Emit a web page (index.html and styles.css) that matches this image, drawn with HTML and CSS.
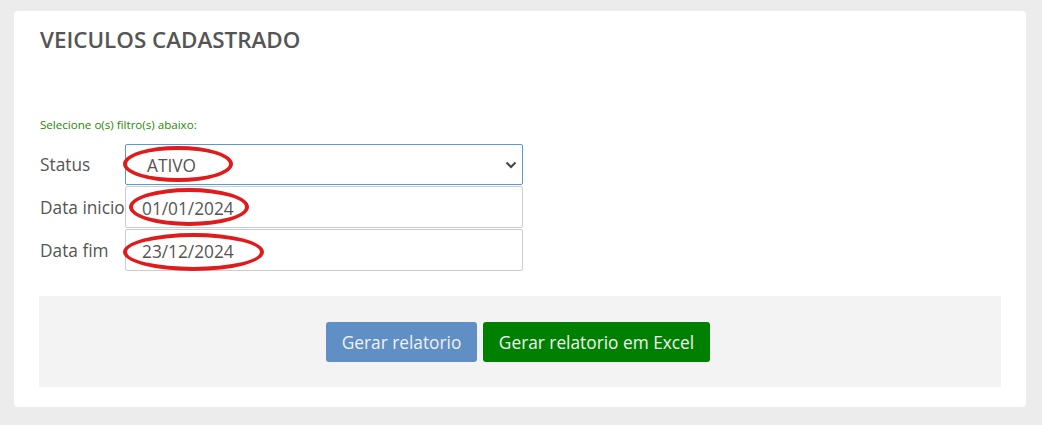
FILE: index.html
```html
<!DOCTYPE html>
<html lang="pt">
<head>
<meta charset="utf-8">
<title>Veiculos cadastrado</title>
<link rel="stylesheet" href="styles.css">
</head>
<body>
<div class="card">
  <h2 class="title">VEICULOS CADASTRADO</h2>
  <p class="hint">Selecione o(s) filtro(s) abaixo:</p>
  <div class="form">
    <div class="row">
      <label class="label">Status</label>
      <div class="field field-select">
        <span class="value value-select">ATIVO</span>
        <svg class="chevron" width="12" height="8" viewBox="0 0 12 8"><path d="M1.5 1.5 L6 6 L10.5 1.5" fill="none" stroke="#444" stroke-width="2"/></svg>
        <span class="mark mark-1"></span>
      </div>
    </div>
    <div class="row">
      <label class="label">Data inicio</label>
      <div class="field field-input">
        <span class="value">01/01/2024</span>
        <span class="mark mark-2"></span>
      </div>
    </div>
    <div class="row">
      <label class="label">Data fim</label>
      <div class="field field-input">
        <span class="value">23/12/2024</span>
        <span class="mark mark-3"></span>
      </div>
    </div>
  </div>
  <div class="actions">
    <button class="btn btn-blue">Gerar relatorio</button>
    <button class="btn btn-green">Gerar relatorio em Excel</button>
  </div>
</div>
</body>
</html>
```
FILE: styles.css
```css
html, body {
  margin: 0;
  padding: 0;
  background: #ececec;
}
body {
  padding: 11px 16px 0 14px;
  font-family: "Open Sans", "Liberation Sans", sans-serif;
  color: #555;
}
.card {
  width: 1012px;
  height: 396px;
  box-sizing: border-box;
  background: #fff;
  border-radius: 4px;
  padding: 14px 25px 20px 25px;
}
.title {
  margin: 0 0 0 1px;
  font-size: 22.4px;
  line-height: 30px;
  font-weight: 600;
  color: #555;
}
.hint {
  margin: 62px 0 0 1px;
  font-size: 11.6px;
  line-height: 15px;
  color: #1e8a00;
  font-weight: 400;
}
.form {
  margin-top: 12px;
  display: flex;
  flex-direction: column;
  gap: 1px;
}
.row {
  display: flex;
  align-items: center;
}
.label {
  width: 86px;
  padding-left: 1px;
  box-sizing: border-box;
  font-size: 17.3px;
  color: #555;
  white-space: nowrap;
}
.field {
  position: relative;
  width: 398px;
  height: 42px;
  box-sizing: border-box;
  border: 1px solid #ccc;
  border-radius: 2px;
  display: flex;
  align-items: center;
  padding-left: 16px;
  padding-top: 2px;
  font-size: 17.3px;
  color: #555;
}
.field-select {
  height: 41px;
  border-color: #5b97e0;
  padding-left: 21px;
}
.chevron {
  position: absolute;
  right: 5px;
  top: 16px;
}
.mark {
  position: absolute;
  border: 4px solid #e01b1b;
  border-radius: 50%;
  box-sizing: border-box;
  pointer-events: none;
}
.mark-1 {
  left: -3px;
  top: 1px;
  width: 110px;
  height: 36px;
}
.mark-2 {
  left: 3px;
  top: 1px;
  width: 120px;
  height: 38px;
}
.mark-3 {
  left: -3px;
  top: 3px;
  width: 141px;
  height: 38px;
}
.actions {
  margin-top: 25px;
  height: 91px;
  background: #f3f3f3;
  display: flex;
  justify-content: center;
  align-items: flex-start;
  padding-top: 26px;
  padding-right: 4px;
  box-sizing: border-box;
  gap: 6px;
}
.btn {
  height: 40px;
  border: none;
  border-radius: 3px;
  font-family: "Open Sans", "Liberation Sans", sans-serif;
  font-size: 17.3px;
  color: #f2f2f2;
  padding: 0 10px;
}
.btn-blue {
  background: #5f8fc4;
  width: 151px;
}
.btn-green {
  background: #008000;
  width: 227px;
}
```
